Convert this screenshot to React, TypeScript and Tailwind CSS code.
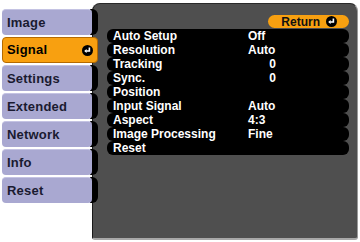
import React from "react";

const EnterIcon = () => (
  <svg width="11" height="11" viewBox="0 0 11 11">
    <circle cx="5.5" cy="5.5" r="5.5" fill="#000" />
    <path d="M7.4 2.6 V6 H4.2" stroke="#fff" strokeWidth="1.6" fill="none" />
    <path d="M2.2 6 L4.6 3.9 V8.1 Z" fill="#fff" />
  </svg>
);

const tabs = ["Image", "Signal", "Settings", "Extended", "Network", "Info", "Reset"];

const rows: { label: string; value?: string; num?: boolean }[] = [
  { label: "Auto Setup", value: "Off" },
  { label: "Resolution", value: "Auto" },
  { label: "Tracking", value: "0", num: true },
  { label: "Sync.", value: "0", num: true },
  { label: "Position" },
  { label: "Input Signal", value: "Auto" },
  { label: "Aspect", value: "4:3" },
  { label: "Image Processing", value: "Fine" },
  { label: "Reset" },
];

export default function App() {
  return (
    <div className="w-[360px] h-[242px] bg-white flex font-['Liberation_Sans',Arial,sans-serif] font-bold">
      <div className="w-[98px] shrink-0 pt-[9px] pl-[2px] flex flex-col gap-[2px] relative z-10 -mr-[6px]">
        {tabs.map((t) =>
          t === "Signal" ? (
            <div
              key={t}
              className="h-[26px] w-[96px] rounded-[4px] bg-[#f8a010] border border-[#b56a00] flex items-center justify-between pl-[4px] pr-[4px] text-[13px] tracking-[0.2px] text-black"
            >
              <span>{t}</span>
              <EnterIcon />
            </div>
          ) : (
            <div key={t} className="h-[26px] flex">
              <div className="w-[92px] rounded-[4px] bg-[#a9a8d1] border-t border-t-[#c4c3e3] flex items-center pl-[5px] text-[13px] tracking-[0.2px] text-[#1a1a30] relative z-10">
                {t}
              </div>
              <div className="w-[8px] -ml-[2px] rounded-r-[6px] bg-black" />
            </div>
          )
        )}
      </div>
      <div className="flex-1 mt-[3px] mb-[2px] mr-[2px] bg-[#4f4f4f] rounded-tl-[8px] rounded-tr-[8px] rounded-br-[3px] rounded-bl-[3px] border-t border-l border-t-[#2a2a2a] border-l-[#1a1a1a] border-b-2 border-r border-b-[#a8a8a8] border-r-[#9a9a9a] pl-[14px] pr-[8px] pt-[11px]">
        <div className="flex justify-end">
          <div className="h-[13px] rounded-full bg-[#f8a010] flex items-center pl-[13px] pr-[12px] gap-[6px] text-[12px] text-[#111] leading-none">
            <span>Return</span>
            <EnterIcon />
          </div>
        </div>
        <div className="mt-[1px] flex flex-col">
          {rows.map((r) => (
            <div
              key={r.label}
              className="h-[14px] rounded-[6px] bg-black flex items-center pl-[6px] text-[12px] text-white leading-none"
            >
              <span className="w-[135px]">{r.label}</span>
              {r.value && (
                <span className={`w-[28px] ${r.num ? "text-right" : "text-left"}`}>{r.value}</span>
              )}
            </div>
          ))}
        </div>
      </div>
    </div>
  );
}
